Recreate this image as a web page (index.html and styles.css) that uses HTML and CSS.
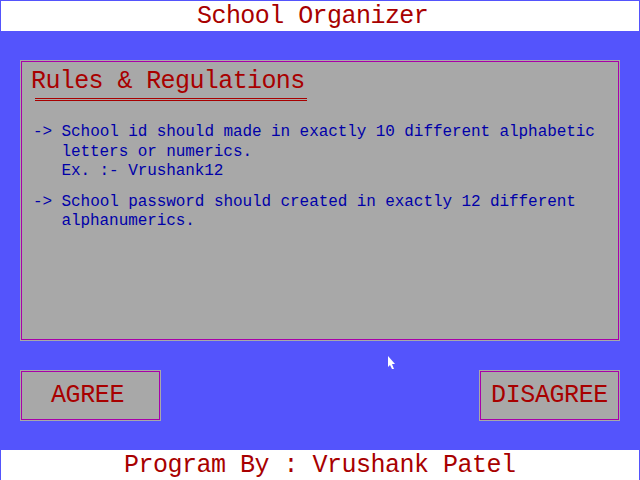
FILE: index.html
```html
<!DOCTYPE html>
<html>
<head>
<meta charset="utf-8">
<title>School Organizer</title>
<link rel="stylesheet" href="styles.css">
</head>
<body>
<header class="topbar">School Organizer</header>
<main class="panel">
  <div class="panel-title">Rules &amp; Regulations</div>
  <div class="title-rule"></div>
  <div class="rules">
    <div class="rule">-&gt; School id should made in exactly 10 different alphabetic<br>letters or numerics.<br>Ex. :- Vrushank12</div>
    <div class="rule">-&gt; School password should created in exactly 12 different<br>alphanumerics.</div>
  </div>
</main>
<div class="actions">
  <div class="btn btn-agree">AGREE</div>
  <div class="btn">DISAGREE</div>
</div>
<footer class="bottombar">Program By : Vrushank Patel</footer>
<svg class="pointer" width="9" height="14" viewBox="0 0 9 14"><polygon points="0,0 0,11 2,9 4,13 6,13 4,8 7,8" fill="#ffffff"/></svg>
</body>
</html>
```
FILE: styles.css
```css
html, body {
  margin: 0;
  padding: 0;
}
body {
  width: 640px;
  height: 480px;
  overflow: hidden;
  background: #5454fc;
  font-family: "Liberation Mono", "DejaVu Sans Mono", monospace;
  position: relative;
  padding-top: 1px;
  box-sizing: border-box;
}
.topbar {
  margin: 0 1px;
  height: 30px;
  background: #ffffff;
  color: #a80000;
  font-size: 25px;
  letter-spacing: -0.55px;
  line-height: 30px;
  padding: 1px 0 0 196px;
  box-sizing: border-box;
  white-space: nowrap;
  overflow: visible;
}
.panel {
  display: block;
  margin: 29px 0 0 20px;
  width: 600px;
  height: 281px;
  box-sizing: border-box;
  background: #a8a8a8;
  box-shadow: inset 0 0 0 1px #a8a8a8, inset 0 0 0 2px #a800a8;
  padding-top: 10px;
}
.panel-title {
  margin-left: 11px;
  font-size: 25px;
  letter-spacing: -0.6px;
  line-height: 24px;
  color: #a80000;
  white-space: nowrap;
}
.title-rule {
  margin: 4px 0 0 15px;
  width: 272px;
  height: 1px;
  border-top: 1px solid #a80000;
  border-bottom: 1px solid #a80000;
}
.rules {
  margin: 22px 0 0 13px;
  font-size: 16px;
  letter-spacing: -0.08px;
  line-height: 19.5px;
  color: #0000a8;
  white-space: nowrap;
}
.rule {
  padding-left: 28.5px;
  text-indent: -28.5px;
}
.rule + .rule {
  margin-top: 11px;
}
.actions {
  display: flex;
  justify-content: space-between;
  margin-top: 29px;
  padding: 0 20px;
}
.btn {
  width: 141px;
  height: 51px;
  background: #a8a8a8;
  box-shadow: inset 0 0 0 1px #a8a8a8, inset 0 0 0 2px #a800a8;
  color: #a80000;
  font-size: 25px;
  letter-spacing: -0.4px;
  line-height: 50px;
  padding-top: 1px;
  text-align: center;
  white-space: nowrap;
  box-sizing: border-box;
}
.btn-agree {
  padding-right: 6px;
}
.bottombar {
  margin: 29px 1px 0;
  height: 30px;
  background: #ffffff;
  color: #a80000;
  font-size: 25px;
  letter-spacing: -0.5px;
  line-height: 29px;
  padding: 1px 0 0 123px;
  box-sizing: border-box;
  white-space: nowrap;
}
.pointer {
  position: absolute;
  left: 388px;
  top: 356px;
}
```
